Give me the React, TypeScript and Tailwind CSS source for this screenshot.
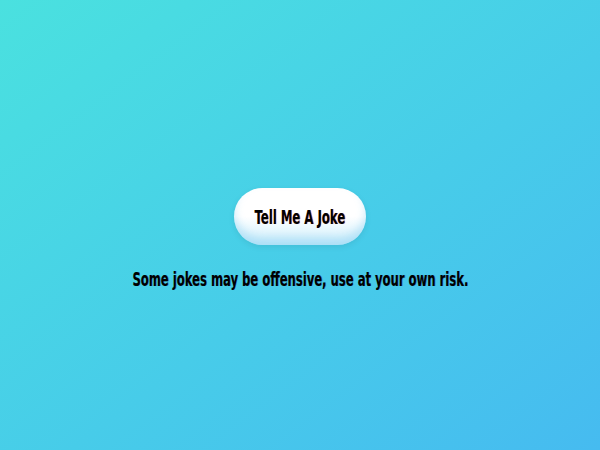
export default function App() {
  return (
    <div className="w-[600px] h-[450px] bg-gradient-to-br from-[#4ae1df] to-[#46bbf0] flex flex-col items-center pt-[188px] font-['DejaVu_Sans_Condensed',sans-serif]">
      <button className="w-[132px] h-[57px] rounded-full bg-gradient-to-b from-white via-white to-[#cdeefb] shadow-[inset_0_-7px_8px_rgba(120,200,240,0.4),0_2px_6px_rgba(0,0,0,0.08)] flex items-center justify-center">
        <span className="inline-block scale-x-[0.65] whitespace-nowrap text-[20px] font-bold text-black [text-shadow:1px_0_0_rgba(220,40,40,0.55)]">
          Tell Me A Joke
        </span>
      </button>
      <p className="mt-[19px] inline-block scale-x-[0.645] whitespace-nowrap text-[20px] font-bold text-black [text-shadow:1px_0_0_rgba(40,60,120,0.5)]">
        Some jokes may be offensive, use at your own risk.
      </p>
    </div>
  );
}
